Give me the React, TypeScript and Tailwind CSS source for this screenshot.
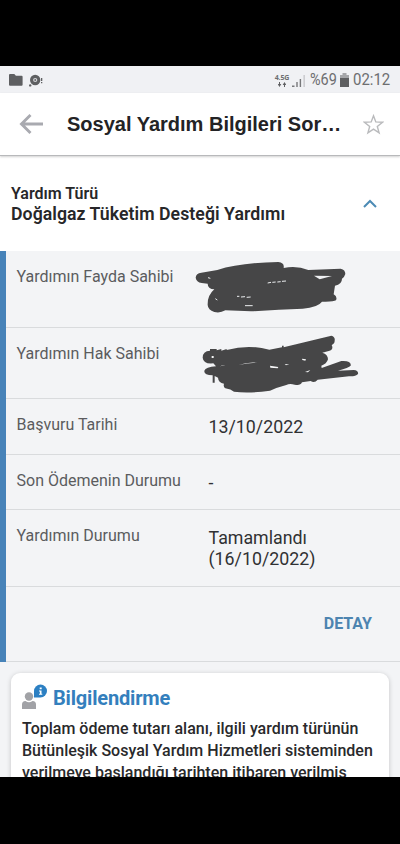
import type { ReactNode } from 'react'

function StatusBar() {
  return (
    <div className="flex h-[27px] shrink-0 items-center bg-[#f0f1f4] pl-[9px] pr-[9px] pt-[1px] text-[#6d6e70]">
      <svg className="h-[12px] w-[14px]" viewBox="0 0 14 12" fill="#5e5f61">
        <path d="M1 0h4.3l1.6 1.7H12.6q1 0 1 1V10.700q0 1-1 1H1q-1 0-1-1V1q0-1 1-1z" />
      </svg>
      <svg className="ml-[6px] h-[13px] w-[14px]" viewBox="0 0 14 13" fill="#5e5f61">
        <circle cx="6.200" cy="6" r="5.200" />
        <circle cx="1.200" cy="11.400" r="1.200" />
        <circle cx="6.200" cy="6" r="2.100" fill="#d4d5d8" />
        <circle cx="6.200" cy="6" r="0.900" />
        <path d="M12 4h1.300v3H12zM12 8h1.300v1.300H12z" />
      </svg>
      <div className="ml-auto flex h-full items-center">
        <div className="flex w-[16px] flex-col items-center">
          <span className="font-['Open_Sans',sans-serif] text-[7px] font-bold leading-[8px] tracking-[-0.1px]">4.5G</span>
          <svg className="h-[5px] w-[8px]" viewBox="0 0 8 5" fill="#5e5f61">
            <path d="M1 0h1v2h1.300L1.500 5-.3 2h1.300zM6 5h1V3h1.300L6.500 0 4.700 3H6z" />
          </svg>
        </div>
        <svg className="ml-[2px] h-[13px] w-[14px]" viewBox="0 0 14 13">
          <path d="M0 11.500h2.500V13H0zM4.300 8h1.400v5H4.300zM7.700 5h1.400v8H7.700z" fill="#77787a" />
          <path d="M11.500 1h1.300v12h-1.300z" fill="#c4c5c8" />
        </svg>
        <span className="ml-[4px] w-[27px] origin-left scale-x-[0.85] whitespace-nowrap text-[17px]">%69</span>
        <svg className="ml-[3px] h-[14px] w-[9px]" viewBox="0 0 9 14">
          <path d="M2.500 0h4v2H9v12H0V2h2.500z" fill="#a5a6a9" />
          <path d="M0 5h9v9H0z" fill="#5e5f61" />
        </svg>
        <span className="ml-[4px] w-[38px] origin-left scale-x-[0.88] whitespace-nowrap text-[17px]">02:12</span>
      </div>
    </div>
  )
}

function Header() {
  return (
    <header className="z-10 flex h-[63px] shrink-0 items-center border-b border-[#b8b9bb] bg-white pl-[19px] pr-[16px] shadow-[0_1px_2px_rgba(0,0,0,0.18)]">
      <svg className="h-[22px] w-[25px]" viewBox="0 0 25 22" fill="none" stroke="#a9aab0" strokeWidth="2.900">
        <path d="M24 11H3M11.500 2 2.500 11l9 9" />
      </svg>
      <h1 className="ml-[23px] w-[280px] whitespace-nowrap font-['Liberation_Sans',Arial,sans-serif] text-[20px] font-bold text-[#232325]">
        Sosyal Yardım Bilgileri Sor…
      </h1>
      <svg className="ml-auto h-[21px] w-[21px] shrink-0" viewBox="0 0 21 21" fill="none" stroke="#b9babc" strokeWidth="1.400">
        <path d="m10.500 1.800 2.300 6.100 6.800.3-5.300 4.200 1.800 6.500-5.600-3.700-5.600 3.700 1.800-6.500L1.400 8.200l6.800-.3z" />
      </svg>
    </header>
  )
}

function Row({ label, height, children }: { label: string; height: string; children: ReactNode }) {
  return (
    <div className={`flex shrink-0 border-b border-[#d9dbdd] pl-[10.500px] pt-[16px] ${height}`}>
      <span className="w-[192px] shrink-0 whitespace-nowrap text-[16px] leading-[20px] text-[#5b5c5e]">{label}</span>
      {children}
    </div>
  )
}

function BeneficiaryMask() {
  return (
    <svg className="ml-[-14px] mt-[-6px] h-[53px] w-[152px] shrink-0" viewBox="15 273 456 159">
      <path
        d="M17 323Q18 309 34 308L82 300Q150 278 265 276Q284 278 281 294Q320 286 355 300L452 296Q466 299 466 312Q462 324 456 326Q456 343 435 347L431 373Q443 379 438 391Q431 396 396 395Q384 412 338 416Q265 419 183 424L106 421Q91 430 73 426Q54 420 53 405Q52 376 73 358Q53 357 53 341L35 339Q19 336 17 323z"
        fill="#464647"
      />
      <path d="M372 317 426 318 389 328z" fill="#eff0f2" />
      <path d="m233 339 10-2m4 0 10-1m5 0 10-1m4-1 12-1M141 379h7m5 2 12-1m5 2 12-1M165 407h23M54 323l7 2M76 386l6 4" stroke="#eceef0" strokeWidth="3" />
    </svg>
  )
}

function HolderMask() {
  return (
    <svg className="ml-[-6.500px] mt-[-9px] h-[58px] w-[157px] shrink-0" viewBox="36 30 471 174">
      <path
        d="M38 98Q38 78 60 77V72H80v4l14-4v5l16-5v3Q176 57 238 74L276 67v-5h5v5L424 32Q436 35 434 47Q434 56 425 60Q432 73 416 78L397 83Q414 88 414 103Q410 117 394 122L395 129L454 108Q485 106 482 122Q477 128 444 137L491 135Q506 136 504 147Q497 155 477 154L383 164Q374 175 362 168L336 172Q331 183 314 179Q299 174 289 180Q262 187 240 197Q176 206 132 200Q123 193 106 190Q99 186 102 176Q85 173 84 158L74 153v20h-6v-22Q41 151 43 137Q47 126 78 124L70 115Q40 118 38 98z"
        fill="#464647"
      />
      <path d="M146 120q27-10 56-7-30 1-56 7zM90 124q8-5 16-3-9 1-16 3zM240 122l25 4-2 4-22-2zM284 118l14-1-10 4zM336 101l12 2-2 4-9-2zM345 141l16-6-7 7zM65 93h6v6h-6z" fill="#f5f6f7" />
    </svg>
  )
}

function InfoCard() {
  return (
    <section className="mx-[11px] mt-[11px] h-[140px] shrink-0 rounded-[9px] bg-white pl-[11px] pt-[11px] shadow-[0_1px_5px_rgba(0,0,0,0.2)]">
      <div className="flex h-[28px] items-start">
        <svg className="h-[26px] w-[26px]" viewBox="0 0 26 26">
          <circle cx="7" cy="12.500" r="4.200" fill="#a1a2a6" />
          <path d="M0 25v-4.500q0-3.500 3.500-3.500 3.500 2.500 7 0 3.500 0 3.500 3.500V25z" fill="#a1a2a6" />
          <path d="M12 13.500V7a6.500 6.500 0 1 1 6.500 6.500z" fill="#2c80c3" />
          <path d="M17.700 3.500h2v1.700h-2zM17 6.500h2.500v3.300h.8v1H17v-1h.9V7.500H17z" fill="#fff" />
        </svg>
        <h2 className="ml-[5px] mt-[2px] whitespace-nowrap text-[20px] font-bold leading-[24px] tracking-[-0.180px] text-[#347fbd]">Bilgilendirme</h2>
      </div>
      <p className="mt-[6px] whitespace-nowrap text-[16px] font-medium leading-[22px] text-[#29292b]">
        Toplam ödeme tutarı alanı, ilgili yardım türünün
        <br />
        Bütünleşik Sosyal Yardım Hizmetleri sisteminden
        <br />
        verilmeye başlandığı tarihten itibaren verilmiş
      </p>
    </section>
  )
}

export default function App() {
  return (
    <div className="h-[844px] w-[400px] overflow-hidden bg-black pt-[66px] font-[Roboto,sans-serif]">
      <div className="flex h-[711px] flex-col overflow-hidden bg-[#f3f4f6]">
        <StatusBar />
        <Header />
        <div className="flex h-[95px] shrink-0 items-center justify-between bg-white pl-[11px] pr-[23px] text-[#272729]">
          <div className="whitespace-nowrap pt-[1px] font-semibold">
            <div className="text-[16px] leading-[20px]">Yardım Türü</div>
            <div className="text-[17.700px] leading-[21px] tracking-[0.050px]">Doğalgaz Tüketim Desteği Yardımı</div>
          </div>
          <svg className="h-[10px] w-[14px]" viewBox="0 0 14 10" fill="none" stroke="#4c8bb5" strokeWidth="2">
            <path d="m1 8 6-6 6 6" />
          </svg>
        </div>
        <div className="flex h-[411px] shrink-0 flex-col border-l-[6px] border-[#4783b9] text-[17.800px] leading-[21px] text-[#303133]">
          <Row label="Yardımın Fayda Sahibi" height="h-[77px]">
            <BeneficiaryMask />
          </Row>
          <Row label="Yardımın Hak Sahibi" height="h-[71px]">
            <HolderMask />
          </Row>
          <Row label="Başvuru Tarihi" height="h-[56px]">
            <span className="pt-[1px]">13/10/2022</span>
          </Row>
          <Row label="Son Ödemenin Durumu" height="h-[55px]">
            <span className="pt-[1px]">-</span>
          </Row>
          <Row label="Yardımın Durumu" height="h-[77px]">
            <span className="pt-[1px]">
              Tamamlandı
              <br />
              (16/10/2022)
            </span>
          </Row>
          <div className="flex h-[75px] shrink-0 items-center justify-end border-b border-[#d9dbdd] pb-[1px] pr-[28px]">
            <button className="text-[16px] font-bold text-[#4d84b0]">DETAY</button>
          </div>
        </div>
        <InfoCard />
      </div>
    </div>
  )
}
